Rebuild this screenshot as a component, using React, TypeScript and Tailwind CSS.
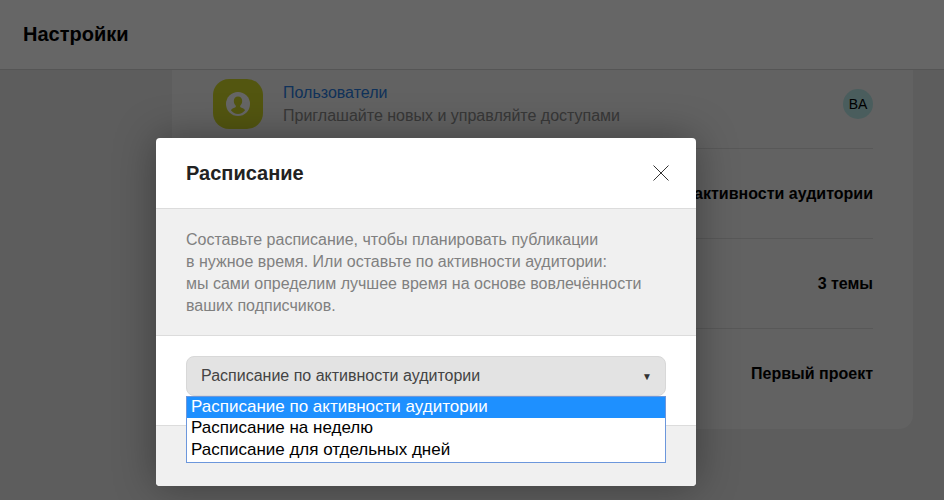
const font = { fontFamily: '"Liberation Sans", Arial, sans-serif' };

function UserBadge() {
  return (
    <div className="flex h-[50px] w-[50px] shrink-0 items-center justify-center rounded-[16px] bg-[#d0d82a]">
      <svg width="24" height="24" viewBox="0 0 24 24">
        <circle cx="12" cy="12" r="12" fill="#ffffff" />
        <path
          d="M12 4.500c-2.600 0-4.200 2-4.200 4.600 0 2 .9 3.600 2 4.600v1.400c-1.800.9-3.700 1.500-4.900 3.200C6.700 20.500 9.200 22 12 22s5.300-1.500 7.100-3.700c-1.200-1.700-3.100-2.300-4.900-3.200v-1.400c1.100-1 2-2.600 2-4.600 0-2.600-1.600-4.600-4.200-4.600z"
          fill="#d0d82a"
        />
      </svg>
    </div>
  );
}

function SettingRow({ value, height }: { value: string; height: string }) {
  return (
    <div className={`flex items-center justify-end border-b border-[#dcdcdc] text-base font-bold text-black ${height}`}>
      {value}
    </div>
  );
}

export default function App() {
  return (
    <div className="relative h-[500px] w-[944px] overflow-hidden bg-[#e8e8e8]" style={font}>
      {/* page behind the dialog */}
      <header className="flex h-[70px] items-center border-b border-[#d4d4d4] bg-white pb-[2px] pl-[23px]">
        <h1 className="text-xl font-bold text-black">Настройки</h1>
      </header>

      <main className="ml-[172px] w-[741px] rounded-b-[14px] bg-[#f4f4f4] pl-[41px] pr-[40px] pb-[10px]">
        <div className="flex h-[79px] items-start gap-5 border-b border-[#dcdcdc] pt-[9px]">
          <UserBadge />
          <div className="flex-1 pt-[2px] text-base leading-[23px]">
            <div className="text-[#2a7de1]">Пользователи</div>
            <div className="text-[#8c8c8c]">Приглашайте новых и управляйте доступами</div>
          </div>
          <div className="mt-[10px] flex h-[30px] w-[30px] items-center justify-center rounded-full bg-[#b8e8e8] text-sm text-black">
            BA
          </div>
        </div>
        <SettingRow value="Расписание по активности аудитории" height="h-[90px]" />
        <SettingRow value="3 темы" height="h-[90px]" />
        <div className="flex h-[90px] items-center justify-end text-base font-bold text-black">Первый проект</div>
      </main>

      {/* dim layer */}
      <div className="absolute inset-0 bg-black/60" />

      {/* dialog */}
      <div className="absolute left-[156px] top-[138px] w-[540px] rounded-[4px] bg-white shadow-[0_0_40px_rgba(0,0,0,0.35)]">
        <div className="flex h-[71px] items-center justify-between border-b border-[#dcdcdc] pl-[30px] pr-[27px]">
          <h2 className="text-xl font-bold text-[#222222]">Расписание</h2>
          <svg width="16" height="16" viewBox="0 0 16 16" fill="none" stroke="#333333" strokeWidth="1">
            <path d="M0.5 0.5 15.500 15.500M15.500 0.500 0.500 15.500" />
          </svg>
        </div>

        <div className="h-[127px] border-b border-[#dcdcdc] bg-[#f0f0f0] px-[30px] pt-[20px] text-base leading-[22px] text-[#808080]">
          Составьте расписание, чтобы планировать публикации
          <br />в нужное время. Или оставьте по активности аудитории:
          <br />мы сами определим лучшее время на основе вовлечённости
          <br />ваших подписчиков.
        </div>

        <div className="relative h-[90px] border-b border-[#dcdcdc] px-[30px] pt-[20px]">
          <div className="flex h-[40px] items-center justify-between rounded-[8px] border border-[#d8d8d8] bg-[#e3e3e3] pl-[14px] pr-[13px] text-base text-[#444444]">
            <span>Расписание по активности аудитории</span>
            <span className="text-[10px] text-[#333333]">▼</span>
          </div>

          {/* open select list */}
          <div className="absolute left-[30px] top-[60px] z-10 w-[480px] border border-[#6c97dc] bg-white text-[17px] leading-[19px] text-black">
            <div className="h-[21px] bg-[#1e90ff] pl-1 text-white">Расписание по активности аудитории</div>
            <div className="h-[22px] pl-1">Расписание на неделю</div>
            <div className="h-[22px] pl-1">Расписание для отдельных дней</div>
          </div>
        </div>

        <div className="h-[60px] rounded-b-[4px] bg-[#f0f0f0]" />
      </div>
    </div>
  );
}
